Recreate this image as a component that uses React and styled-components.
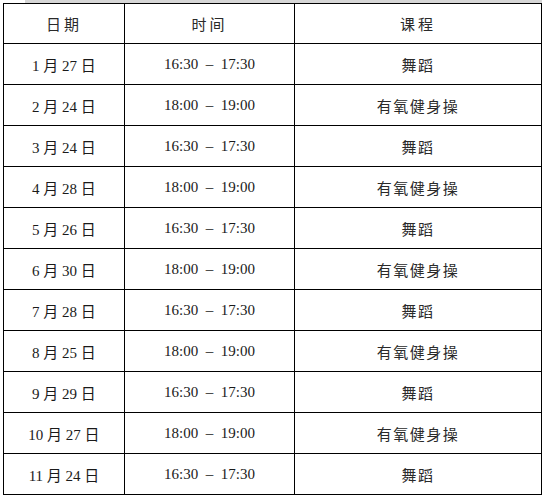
import styled, { createGlobalStyle } from "styled-components";

const GlobalStyle = createGlobalStyle`
  html, body {
    margin: 0;
    padding: 0;
    background: #fff;
  }
`;

const Page = styled.div`
  width: 542px;
  height: 497px;
  overflow: hidden;
  background: #fff;
`;

const TopStrip = styled.div`
  height: 3px;
  margin-left: 25px;
  background: #d6d6d6;
`;

const TableWrap = styled.div`
  padding-left: 3px;
`;

const Table = styled.table`
  border-collapse: collapse;
  table-layout: fixed;
  width: 538px;
  font-family: "Liberation Serif", "Noto Sans CJK SC", serif;
  font-size: 15px;
  color: #1a1a1a;
`;

const Cell = styled.td`
  border: 1.5px solid #000;
  height: ${(p) => (p.$head ? 39 : 40)}px;
  padding: 0;
  text-align: center;
  vertical-align: middle;
  white-space: pre;
  letter-spacing: ${(p) => (p.$head ? "3px" : p.$cjk ? "1.5px" : "0")};
  color: ${(p) => (p.$cjk ? "#2a2a2a" : "inherit")};
`;

const schedule = [
  ["1 月 27 日", "16:30  –  17:30", "舞蹈"],
  ["2 月 24 日", "18:00  –  19:00", "有氧健身操"],
  ["3 月 24 日", "16:30  –  17:30", "舞蹈"],
  ["4 月 28 日", "18:00  –  19:00", "有氧健身操"],
  ["5 月 26 日", "16:30  –  17:30", "舞蹈"],
  ["6 月 30 日", "18:00  –  19:00", "有氧健身操"],
  ["7 月 28 日", "16:30  –  17:30", "舞蹈"],
  ["8 月 25 日", "18:00  –  19:00", "有氧健身操"],
  ["9 月 29 日", "16:30  –  17:30", "舞蹈"],
  ["10 月 27 日", "18:00  –  19:00", "有氧健身操"],
  ["11 月 24 日", "16:30  –  17:30", "舞蹈"],
];

export default function App() {
  return (
    <Page>
      <GlobalStyle />
      <TopStrip />
      <TableWrap>
        <Table>
          <colgroup>
            <col style={{ width: 121 }} />
            <col style={{ width: 170 }} />
            <col style={{ width: 247 }} />
          </colgroup>
          <tbody>
            <tr>
              <Cell $head $cjk>日期</Cell>
              <Cell $head $cjk>时间</Cell>
              <Cell $head $cjk>课程</Cell>
            </tr>
            {schedule.map(([date, time, course]) => (
              <tr key={date}>
                <Cell>{date}</Cell>
                <Cell>{time}</Cell>
                <Cell $cjk>{course}</Cell>
              </tr>
            ))}
          </tbody>
        </Table>
      </TableWrap>
    </Page>
  );
}
